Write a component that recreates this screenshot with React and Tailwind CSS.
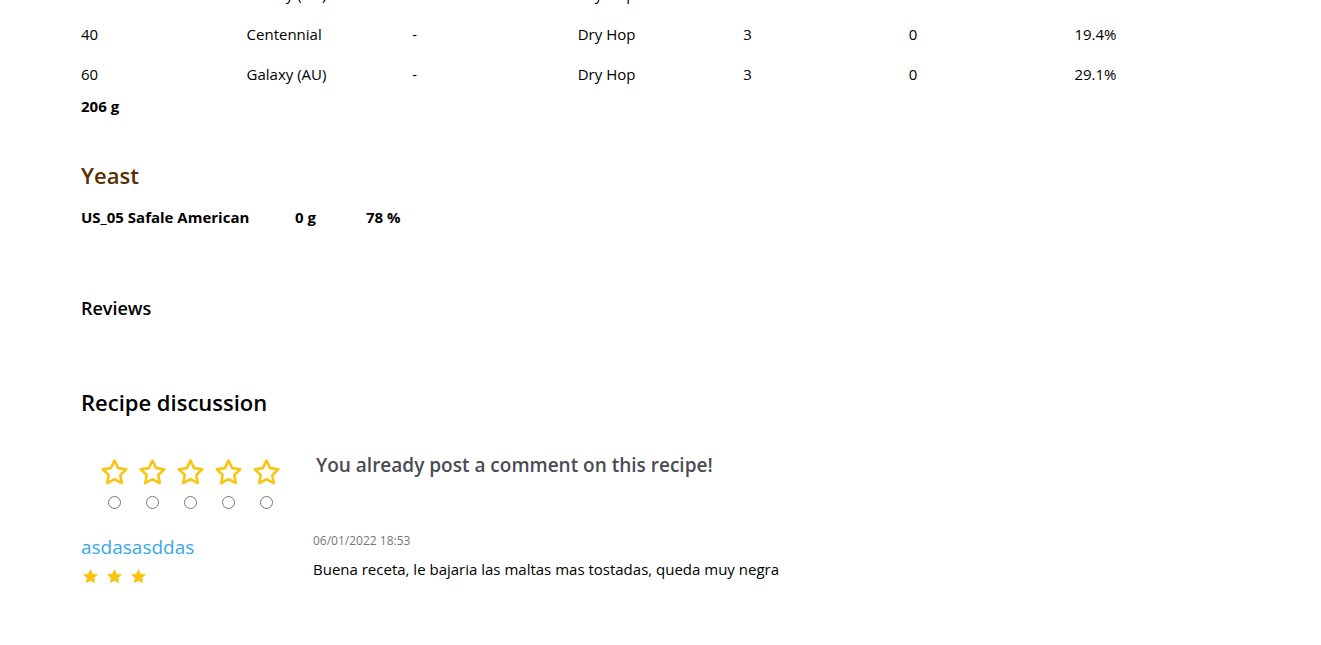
import React from 'react';

const hops = [
    { time: '20', name: 'Galaxy (AU)', form: '-', use: 'Dry Hop', days: '3', ibu: '0', pct: '29.1%' },
    { time: '40', name: 'Centennial', form: '-', use: 'Dry Hop', days: '3', ibu: '0', pct: '19.4%' },
    { time: '60', name: 'Galaxy (AU)', form: '-', use: 'Dry Hop', days: '3', ibu: '0', pct: '29.1%' },
];

const StarOutline = ({ size = 30 }) => (
    <svg width={size} height={size} viewBox="0 0 24 24" fill="none" stroke="#f8c513" strokeWidth="2" strokeLinejoin="round">
        <path d="M12 2.8l2.8 5.8 6.3.9-4.6 4.4 1.1 6.3L12 17.2l-5.6 3 1.1-6.3-4.6-4.4 6.3-.9z" />
    </svg>
);

const StarFilled = ({ size = 19 }) => (
    <svg width={size} height={size} viewBox="0 0 24 24" fill="#f8c513">
        <path d="M12 2.5l2.9 6 6.6.9-4.8 4.6 1.2 6.5L12 17.4l-5.9 3.1 1.2-6.5-4.8-4.6 6.6-.9z" />
    </svg>
);

const App = () => {
    return (
        <div className="min-h-screen bg-white text-black overflow-hidden" style={{ fontFamily: '"Open Sans", "Noto Sans", sans-serif' }}>
            <div className="px-[81px] -mt-[26px]">
                {/* hops table */}
                <div className="w-[1159px] text-[15px]">
                    {hops.map((h, i) => (
                        <div key={i} className="grid grid-cols-7 h-10 items-center">
                            <span>{h.time}</span>
                            <span>{h.name}</span>
                            <span>{h.form}</span>
                            <span>{h.use}</span>
                            <span>{h.days}</span>
                            <span>{h.ibu}</span>
                            <span>{h.pct}</span>
                        </div>
                    ))}
                </div>
                <div className="mt-[1px] text-[15px] font-bold leading-[22px]">206 g</div>

                {/* yeast */}
                <h2 className="mt-[43px] text-[22px] font-semibold text-[#5a3000] leading-[30px]">Yeast</h2>
                <div className="mt-[16px] flex text-[15px] font-bold leading-[22px] whitespace-nowrap">
                    <span className="w-[214px]">US_05 Safale American</span>
                    <span className="w-[71px]">0 g</span>
                    <span>78 %</span>
                </div>

                {/* reviews */}
                <h3 className="mt-[67px] text-[18px] font-semibold leading-[26px]">Reviews</h3>

                <h2 className="mt-[65px] text-[22px] font-semibold leading-[32px]">Recipe discussion</h2>

                <div className="mt-[39px] flex items-start">
                    <div className="w-[235px] pl-[14px]">
                        <div className="flex">
                            {[0, 1, 2, 3, 4].map((i) => (
                                <div key={i} className="w-[38px] flex flex-col items-center">
                                    <StarOutline size={31} />
                                    <span className="mt-[8px] w-[13px] h-[13px] rounded-full border border-[#777]" />
                                </div>
                            ))}
                        </div>
                    </div>
                    <p className="-mt-[5px] text-[19px] font-semibold text-[#4b4b55] leading-[26px]">
                        You already post a comment on this recipe!
                    </p>
                </div>

                {/* comment */}
                <div className="mt-[20px] flex">
                    <div className="w-[232px] pt-[5px]">
                        <div className="text-[19px] font-medium text-[#38a9e8] leading-[26px]">asdasasddas</div>
                        <div className="mt-[7px] flex gap-[5px]">
                            <StarFilled />
                            <StarFilled />
                            <StarFilled />
                        </div>
                    </div>
                    <div className="pt-[3px]">
                        <div className="text-[12px] text-[#777] leading-[18px]">06/01/2022 18:53</div>
                        <div className="mt-[8px] text-[15px] leading-[22px]">
                            Buena receta, le bajaria las maltas mas tostadas, queda muy negra
                        </div>
                    </div>
                </div>
            </div>
        </div>
    );
};

export default App;
